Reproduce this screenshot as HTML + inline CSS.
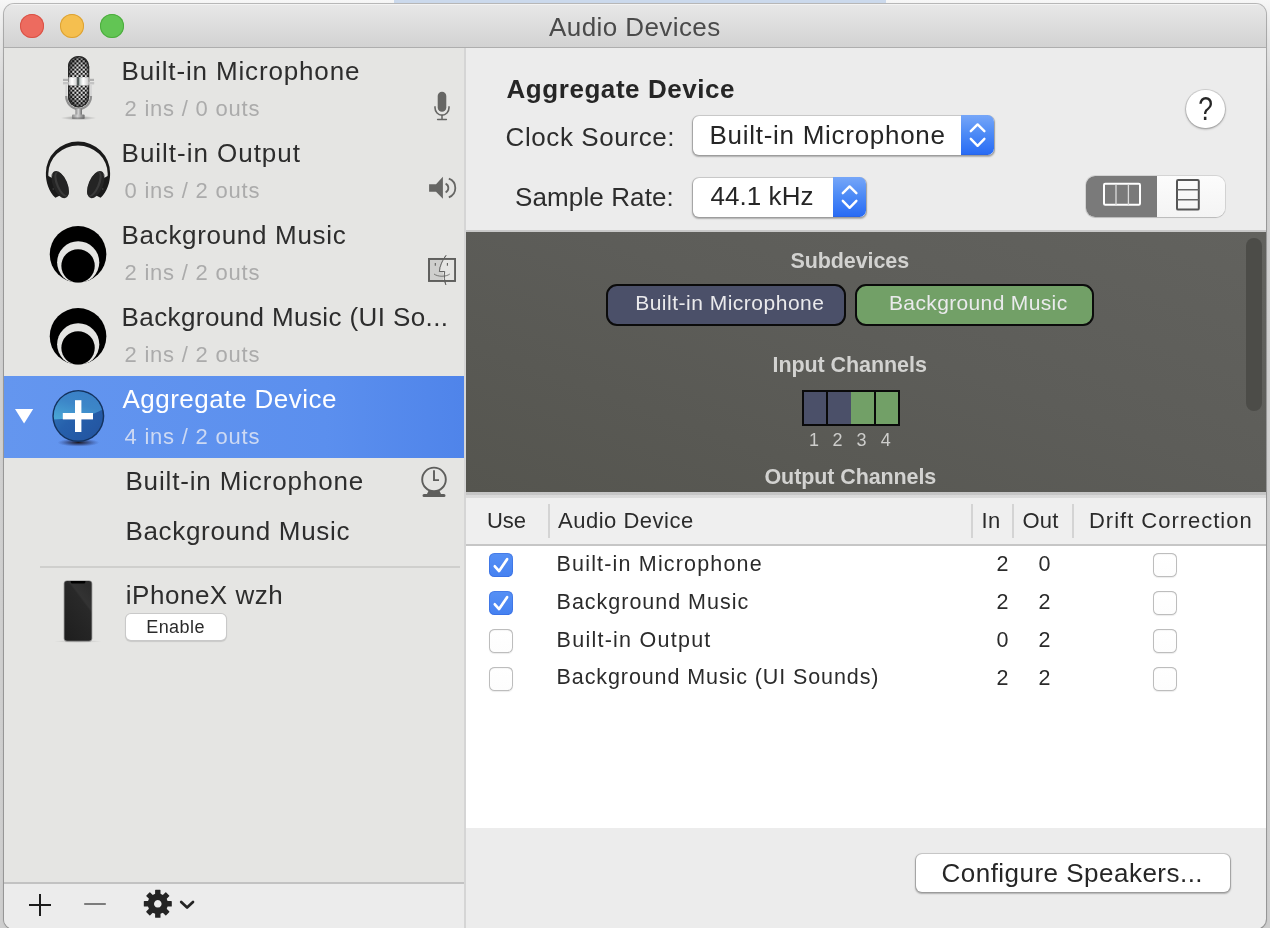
<!DOCTYPE html>
<html>
<head>
<meta charset="utf-8">
<title>Audio Devices</title>
<style>
*{box-sizing:border-box;margin:0;padding:0}
html,body{width:1270px;height:928px;overflow:hidden;background:linear-gradient(#f7f7f7 0,#f3f3f3 8px,#e6e6e6 40px,#d8d8d8 90px,#d1d1d1 140px,#cecece 100%);font-family:"Liberation Sans",sans-serif;color:#2b2b2b}
.abs{position:absolute}
.t{position:absolute;white-space:pre;line-height:1}
#topstrip{left:394px;top:0;width:492px;height:3.4px;background:#cbd9ec}
#win{left:4px;top:4px;width:1262px;height:925px;border-radius:10px;background:#ececec;box-shadow:0 0 0 1px rgba(0,0,0,.24),0 1px 3px 0 rgba(0,0,0,.12);overflow:hidden}
#pg{left:-4px;top:-4px;width:1270px;height:940px;will-change:transform}
#titlebar{left:4px;top:4px;width:1262px;height:44px;background:linear-gradient(#e8e8e8,#d2d2d2);border-bottom:1px solid #aeaeae;box-shadow:inset 0 1px 0 #f3f3f3}
.tl{position:absolute;top:14px;width:24px;height:24px;border-radius:50%}
#sidebar{left:4px;top:48px;width:460px;height:834px;background:#e5e5e3}
#sidediv{left:464.2px;top:48px;width:1.9px;height:900px;background:#d5d5d5;z-index:3}
#sel{left:4px;top:376px;width:460px;height:82px;background:linear-gradient(90deg,#6496ef,#5b8fee 70%,#4f84ea)}
.h1{font-size:26px;color:#2d2d2d}
.sub{font-size:22px;color:#ababab}
#botbar{left:4px;top:881.7px;width:460px;height:62px;background:#ececec;border-top:2px solid #c2c2c2}
</style>
</head>
<body>
<div id="topstrip" class="abs"></div>
<div id="win" class="abs"><div id="pg" class="abs">
  <div id="titlebar" class="abs"></div>
  <div class="tl" style="left:20px;background:#ed6b5f;box-shadow:inset 0 0 0 1px #d95347"></div>
  <div class="tl" style="left:60px;background:#f5bf4f;box-shadow:inset 0 0 0 1px #dca235"></div>
  <div class="tl" style="left:100px;background:#62c554;box-shadow:inset 0 0 0 1px #4cac3e"></div>
  <div class="t" style="left:549px;top:14px;font-size:26px;color:#4a4a4a;letter-spacing:.42px">Audio Devices</div>

  <!-- SIDEBAR -->
  <div id="sidebar" class="abs"></div>
  <div id="sel" class="abs"></div>
  <div id="sidediv" class="abs"></div>
  <div id="botbar" class="abs"></div>

  <!-- SIDEBAR-CONTENT -->
  <div class="t h1" style="left:121.6px;top:58px;letter-spacing:.85px">Built-in Microphone</div>
  <div class="t sub" style="left:124.5px;top:98.2px;letter-spacing:.78px">2 ins / 0 outs</div>
  <div class="t h1" style="left:121.6px;top:140px;letter-spacing:.97px">Built-in Output</div>
  <div class="t sub" style="left:124.5px;top:180.2px;letter-spacing:.78px">0 ins / 2 outs</div>
  <div class="t h1" style="left:121.6px;top:222px;letter-spacing:.68px">Background Music</div>
  <div class="t sub" style="left:124.5px;top:262.2px;letter-spacing:.78px">2 ins / 2 outs</div>
  <div class="t h1" style="left:121.6px;top:304px;letter-spacing:.4px">Background Music (UI So...</div>
  <div class="t sub" style="left:124.5px;top:344.2px;letter-spacing:.78px">2 ins / 2 outs</div>
  <div class="t h1" style="left:122.4px;top:386px;letter-spacing:.5px;color:#fff">Aggregate Device</div>
  <div class="t sub" style="left:124.5px;top:426.2px;letter-spacing:.78px;color:#cdd9f3">4 ins / 2 outs</div>
  <div class="t h1" style="left:125.4px;top:468px;letter-spacing:.85px">Built-in Microphone</div>
  <div class="t h1" style="left:125.4px;top:518px;letter-spacing:.68px">Background Music</div>
  <div class="abs" style="left:40px;top:566px;width:420px;height:2px;background:#cfcfcd"></div>
  <div class="t h1" style="left:125.8px;top:582px;letter-spacing:.52px">iPhoneX wzh</div>
  <div class="abs" style="left:126px;top:614px;width:100px;height:26px;background:#fff;border-radius:5px;box-shadow:0 0 0 1px #c9c9c9,0 1px 1px 1px rgba(0,0,0,.12)"></div>
  <div class="t" style="left:146.2px;top:618px;font-size:18px;letter-spacing:.45px;color:#2b2b2b">Enable</div>

  <!-- SIDEBAR-ICONS -->
  <!-- chrome microphone -->
  <svg class="abs" style="left:40px;top:50px" width="80" height="80" viewBox="40 50 80 80">
    <defs>
      <pattern id="mesh" x="68" y="56" width="4.2" height="4.2" patternUnits="userSpaceOnUse">
        <rect width="4.2" height="4.2" fill="#f4f4f4"/>
        <rect x="0" y="0" width="2.1" height="2.1" fill="#111"/>
        <rect x="2.1" y="2.1" width="2.1" height="2.1" fill="#111"/>
      </pattern>
      <radialGradient id="meshShade" cx="0.55" cy="0.5" r="0.62">
        <stop offset="0" stop-color="#000" stop-opacity="0"/>
        <stop offset="0.55" stop-color="#000" stop-opacity="0.1"/>
        <stop offset="1" stop-color="#222" stop-opacity="0.85"/>
      </radialGradient>
      <linearGradient id="band" x1="0" x2="1">
        <stop offset="0" stop-color="#cfcfcf"/><stop offset="0.18" stop-color="#ffffff"/>
        <stop offset="0.38" stop-color="#d8d8d8"/><stop offset="0.47" stop-color="#26302f"/>
        <stop offset="0.56" stop-color="#bfc7c6"/><stop offset="0.72" stop-color="#ffffff"/>
        <stop offset="1" stop-color="#c8c8c8"/>
      </linearGradient>
      <linearGradient id="stem" x1="0" x2="1">
        <stop offset="0" stop-color="#8a8a8a"/><stop offset="0.45" stop-color="#d2d2d2"/><stop offset="1" stop-color="#6e6e6e"/>
      </linearGradient>
      <radialGradient id="micshadow" cx="0.5" cy="0.5" r="0.5">
        <stop offset="0" stop-color="#000" stop-opacity="0.35"/><stop offset="1" stop-color="#000" stop-opacity="0"/>
      </radialGradient>
    </defs>
    <ellipse cx="78.5" cy="118" rx="18" ry="2.2" fill="url(#micshadow)"/>
    <rect x="68" y="56" width="21.2" height="51.4" rx="10.6" fill="#3a3a3a"/>
    <rect x="69" y="57" width="19.2" height="49.4" rx="9.6" fill="url(#mesh)"/>
    <rect x="68" y="56" width="21.2" height="51.4" rx="10.6" fill="url(#meshShade)"/>
    <path d="M66.2 85 V96 A12.4 13 0 0 0 91 96 V85" fill="none" stroke="#d4d4d4" stroke-width="1.6"/>
    <path d="M66.2 96 A12.4 13 0 0 0 91 96" fill="none" stroke="#8f8f8f" stroke-width="2.2"/>
    <rect x="63" y="78.8" width="5" height="2.2" fill="#b0b0b0"/><rect x="63" y="82" width="5.6" height="2.4" fill="#c4c4c4"/>
    <rect x="89" y="78.8" width="5" height="2.2" fill="#b0b0b0"/><rect x="88.6" y="82" width="5.6" height="2.4" fill="#c4c4c4"/>
    <rect x="68.4" y="77.2" width="20.4" height="8.2" fill="url(#band)"/>
    <rect x="75.4" y="108.6" width="6.6" height="7" fill="url(#stem)"/>
    <rect x="72" y="114.6" width="12.6" height="4.2" rx="1" fill="url(#stem)"/>
    <rect x="72" y="117.4" width="12.6" height="1.4" rx="0.7" fill="#5a5a5a" opacity=".6"/>
  </svg>

  <!-- headphones -->
  <svg class="abs" style="left:38px;top:132px" width="80" height="80" viewBox="0 0 80 80">
    <path fill-rule="evenodd" fill="#1a1a1a" d="M7.9 41 A32.1 31.4 0 0 1 72.1 41 C72.4 50 69 60 62.6 65.8 L55 62 L66 46 L69.6 44 L69.7 41.8 A29.7 28.2 0 0 0 10.3 41.8 L10.4 44 L14 46 L25 62 L17.4 65.8 C11 60 7.6 50 7.9 41 Z"/>
    <ellipse cx="22.2" cy="52.6" rx="7.2" ry="14.4" transform="rotate(-23 22.2 52.6)" fill="#252525"/>
    <ellipse cx="23.2" cy="52.3" rx="5" ry="13" transform="rotate(-23 23.2 52.3)" fill="#3a3a3a"/>
    <ellipse cx="24.6" cy="52" rx="4.2" ry="12.4" transform="rotate(-23 24.6 52)" fill="#242424"/>
    <ellipse cx="57.8" cy="52.6" rx="7.2" ry="14.4" transform="rotate(23 57.8 52.6)" fill="#252525"/>
    <ellipse cx="56.8" cy="52.3" rx="5" ry="13" transform="rotate(23 56.8 52.3)" fill="#3a3a3a"/>
    <ellipse cx="55.4" cy="52" rx="4.2" ry="12.4" transform="rotate(23 55.4 52)" fill="#242424"/>
    <circle cx="14.2" cy="43" r="0.8" fill="#555"/><circle cx="65.8" cy="43" r="0.8" fill="#555"/>
    <circle cx="15.2" cy="57" r="0.7" fill="#4a4a4a"/><circle cx="64.8" cy="57" r="0.7" fill="#4a4a4a"/>
  </svg>

  <!-- Background Music icons -->
  <svg class="abs" style="left:48px;top:224px" width="60" height="60" viewBox="48 224 60 60">
    <defs><clipPath id="bgmc"><circle cx="78.05" cy="254.35" r="28.3"/></clipPath></defs><circle cx="78.05" cy="254.35" r="28.3" fill="#000"/><circle cx="78.2" cy="262.3" r="21.1" fill="#e5e5e3" clip-path="url(#bgmc)"/><circle cx="78.05" cy="265.9" r="16.7" fill="#000"/>
  </svg>
  <svg class="abs" style="left:48px;top:306px" width="60" height="60" viewBox="48 224 60 60">
    <circle cx="78.05" cy="254.35" r="28.3" fill="#000"/><circle cx="78.2" cy="262.3" r="21.1" fill="#e5e5e3" clip-path="url(#bgmc)"/><circle cx="78.05" cy="265.9" r="16.7" fill="#000"/>
  </svg>

  <!-- disclosure triangle + aggregate icon -->
  <svg class="abs" style="left:4px;top:376px" width="120" height="82" viewBox="4 376 120 82">
    <defs>
      <radialGradient id="aggsh" cx="0.5" cy="0.5" r="0.5"><stop offset="0" stop-color="#1a1010" stop-opacity=".95"/><stop offset=".5" stop-color="#20264a" stop-opacity=".55"/><stop offset="1" stop-color="#2a3c80" stop-opacity="0"/></radialGradient>
      <linearGradient id="aggtop" x1="0.7" y1="0" x2="0.2" y2="1"><stop offset="0" stop-color="#3a7ec6"/><stop offset="0.5" stop-color="#3c86c8"/><stop offset="1" stop-color="#49a6d6"/></linearGradient>
      <linearGradient id="aggbot" x1="0" y1="0" x2="1" y2="1"><stop offset="0" stop-color="#3a86c4"/><stop offset="0.45" stop-color="#2660ac"/><stop offset="1" stop-color="#22509c"/></linearGradient>
      <clipPath id="aggclip"><circle cx="78.3" cy="416.1" r="24.5"/></clipPath>
    </defs>
    <path d="M15 409 H33.2 L24.1 423.6 Z" fill="#fff"/>
    <ellipse cx="78.3" cy="442.6" rx="21" ry="4" fill="url(#aggsh)"/>
    <circle cx="78.3" cy="416.1" r="26" fill="#14335f"/>
    <g clip-path="url(#aggclip)">
      <rect x="50" y="388" width="58" height="58" fill="url(#aggbot)"/>
      <path d="M50 388 H108 V406 C96 415 80 419 50 419.6 Z" fill="url(#aggtop)"/>
    </g>
    <rect x="75" y="400.2" width="6.4" height="31.8" fill="#fff"/>
    <rect x="62.8" y="413" width="30.2" height="6.4" fill="#fff"/>
  </svg>

  <!-- small mic -->
  <svg class="abs" style="left:414px;top:84px" width="50" height="40" viewBox="414 84 50 40">
    <rect x="437.7" y="91.8" width="8.6" height="20" rx="4.3" fill="#666664"/>
    <path d="M435 106.2 V107.8 A7 7.4 0 0 0 449 107.8 V106.2" fill="none" stroke="#666664" stroke-width="1.6"/>
    <path d="M442 115 V119.4 M437.6 119.5 H446.4" fill="none" stroke="#666664" stroke-width="1.5" stroke-linecap="round"/>
  </svg>

  <!-- speaker -->
  <svg class="abs" style="left:414px;top:168px" width="50" height="40" viewBox="414 168 50 40">
    <path d="M429.1 184.2 H436 L442.9 176.8 V198.8 L436 191.7 H429.1 Z" fill="#666664"/>
    <path d="M445.6 183.6 A4.9 4.9 0 0 1 445.6 192.4" fill="none" stroke="#666664" stroke-width="1.8"/>
    <path d="M448.8 178.7 A9.9 9.9 0 0 1 448.8 197.3" fill="none" stroke="#666664" stroke-width="1.8"/>
  </svg>

  <!-- finder badge -->
  <svg class="abs" style="left:414px;top:248px" width="50" height="40" viewBox="414 248 50 40">
    <rect x="429" y="258.9" width="14" height="22" fill="#cfcfcd"/>
    <rect x="429" y="258.9" width="26" height="22" fill="none" stroke="#5f5f5d" stroke-width="1.8"/>
    <path d="M446 255.4 C442.6 260 439.8 266 439.4 271.5 H444.7 C444 276 444.4 281 445.8 284.8" fill="none" stroke="#5f5f5d" stroke-width="0.9"/>
    <path d="M442.8 259.8 C441 263.6 439.6 267.6 439.4 271.5 H444.7 C444.2 275 444.2 278 444.6 281 L455 281 V259.8 Z" fill="#e5e5e3"/>
    <rect x="429" y="258.9" width="26" height="22" fill="none" stroke="#5f5f5d" stroke-width="1.8"/>
    <path d="M446 255.4 C442.6 260 439.8 266 439.4 271.5 H444.7 C444 276 444.4 281 445.8 284.8" fill="none" stroke="#5f5f5d" stroke-width="0.9"/>
    <path d="M435.3 263 V265.8 M447.4 263 V265.8" stroke="#5f5f5d" stroke-width="1.1"/>
    <path d="M434 274 C438 277 446 277 449.8 274" fill="none" stroke="#5f5f5d" stroke-width="0.8"/>
  </svg>

  <!-- clock -->
  <svg class="abs" style="left:409px;top:462px" width="50" height="40" viewBox="409 462 50 40">
    <circle cx="434" cy="479.4" r="11.8" fill="none" stroke="#5e5e5c" stroke-width="1.9"/>
    <path d="M434 470.2 V480.1 H439" fill="none" stroke="#5e5e5c" stroke-width="1.9"/>
    <path d="M428.4 491 H439.6 L441 494 H444 A1.5 1.5 0 0 1 444 497 H424 A1.5 1.5 0 0 1 424 494 H427 Z" fill="#5e5e5c"/>
  </svg>

  <!-- iPhone -->
  <svg class="abs" style="left:44px;top:572px" width="80" height="80" viewBox="44 572 80 80">
    <defs>
      <linearGradient id="ipg" x1="0.8" y1="0" x2="0.2" y2="1"><stop offset="0" stop-color="#2c2c2c"/><stop offset="0.27" stop-color="#333"/><stop offset="0.31" stop-color="#292929"/><stop offset="1" stop-color="#1f1f1f"/></linearGradient>
      <radialGradient id="ipsh" cx="0.5" cy="0.5" r="0.5"><stop offset="0" stop-color="#000" stop-opacity="0.18"/><stop offset="1" stop-color="#000" stop-opacity="0"/></radialGradient>
    </defs>
    <ellipse cx="78" cy="641.4" rx="24" ry="1.6" fill="url(#ipsh)"/>
    <rect x="63.7" y="580.4" width="28.6" height="61.3" rx="3.4" fill="#8a8a8a"/>
    <rect x="64.5" y="581" width="27" height="59.8" rx="2.8" fill="url(#ipg)"/>
    <path d="M70.7 581 H85.4 V582 A1.6 1.6 0 0 1 83.8 583.6 H72.3 A1.6 1.6 0 0 1 70.7 582 Z" fill="#000"/>
  </svg>

  <!-- bottom bar icons -->
  <svg class="abs" style="left:4px;top:884px" width="210" height="44" viewBox="4 884 210 44">
    <path d="M40 894 V916 M29 905 H51" stroke="#1c1c1c" stroke-width="2" fill="none"/>
    <path d="M84.2 904 H105.8" stroke="#7c7c7c" stroke-width="2" fill="none"/>
    <g transform="translate(157.8 903.8)" fill="#242424">
      <path fill-rule="evenodd" d="M0 -10.2 A10.2 10.2 0 1 0 0.001 -10.2 Z M0 -3.8 A3.8 3.8 0 1 1 -0.001 -3.8 Z"/>
      <g id="tooth"><rect x="-2.7" y="-14" width="5.4" height="5.5" rx="0.6"/></g>
      <use href="#tooth" transform="rotate(45)"/><use href="#tooth" transform="rotate(90)"/><use href="#tooth" transform="rotate(135)"/>
      <use href="#tooth" transform="rotate(180)"/><use href="#tooth" transform="rotate(225)"/><use href="#tooth" transform="rotate(270)"/><use href="#tooth" transform="rotate(315)"/>
    </g>
    <path d="M181.2 902 L187.1 907.6 L193 902" stroke="#242424" stroke-width="2.7" fill="none" stroke-linecap="round" stroke-linejoin="round"/>
  </svg>

  <!-- RIGHT-PANE -->
  <style>
  .pop{position:absolute;height:39px;background:#fff;border-radius:6px;box-shadow:0 0 0 1px rgba(0,0,0,.11),0 1px 1.5px 0.5px rgba(0,0,0,.26)}
  .pop .cap{position:absolute;right:-.2px;top:-.7px;width:33.2px;height:40.4px;border-radius:0 6.5px 6.5px 0;background:linear-gradient(#76a6f8,#4e8bf6 45%,#2a6df5 96%,#2a62e0)}
  .pl{font-size:21px;color:#eaeaec}
  .hd{font-size:21.5px;font-weight:700;color:#d2d2d0}
  .th{font-size:22px;color:#2b2b2b}
  .td{font-size:21.5px;color:#2b2b2b}
  .cb{position:absolute;width:24px;height:24px;border-radius:5.5px;background:linear-gradient(#fff,#fdfdfd);box-shadow:inset 0 0 0 1px #bdbdbd,inset 0 2px 1.5px -1px rgba(0,0,0,.18),0 1px 1px rgba(0,0,0,.08)}
  .cb.on{background:linear-gradient(#5690f5,#4581f1);box-shadow:inset 0 0 0 1px rgba(40,90,210,.35)}
  .vs{position:absolute;top:504px;width:2px;height:34px;background:#d4d4d4}
  </style>
  <div class="t" style="left:506.5px;top:75.7px;font-size:26px;font-weight:700;color:#262626;letter-spacing:.56px">Aggregate Device</div>
  <div class="t h1" style="left:505.5px;top:124px;letter-spacing:.6px">Clock Source:</div>
  <div class="t h1" style="left:515px;top:184.4px;letter-spacing:.12px">Sample Rate:</div>
  <div class="pop" style="left:692.5px;top:115.5px;width:301.5px"><div class="cap"></div></div>
  <div class="pop" style="left:692.5px;top:177.5px;width:173px"><div class="cap"></div></div>
  <div class="t h1" style="left:709.5px;top:121.5px;letter-spacing:.72px;color:#262626">Built-in Microphone</div>
  <div class="t h1" style="left:710.5px;top:183px;letter-spacing:.05px;color:#262626">44.1 kHz</div>
  <svg class="abs" style="left:961px;top:115px" width="34" height="40" viewBox="961 115 34 40"><path d="M970.8 131.2 L977.6 124.4 L984.4 131.2 M970.8 138.8 L977.6 145.8 L984.4 138.8" fill="none" stroke="#fff" stroke-width="2.4" stroke-linecap="round" stroke-linejoin="round"/></svg>
  <svg class="abs" style="left:833px;top:177px" width="34" height="40" viewBox="961 115 34 40"><path d="M970.8 131.2 L977.6 124.4 L984.4 131.2 M970.8 138.8 L977.6 145.8 L984.4 138.8" fill="none" stroke="#fff" stroke-width="2.4" stroke-linecap="round" stroke-linejoin="round"/></svg>

  <!-- help button -->
  <div class="abs" style="left:1186px;top:89.5px;width:38.5px;height:38.5px;border-radius:50%;background:#fff;box-shadow:0 0 0 1px rgba(0,0,0,.1),0 1px 2px 0.5px rgba(0,0,0,.25)"></div>
  <div class="t" style="left:1197px;top:93.6px;font-size:30px;color:#262626;width:17px;text-align:center;transform:scale(.88,1.08);transform-origin:50% 50%">?</div>

  <!-- segmented control -->
  <div class="abs" style="left:1086px;top:175.5px;width:139px;height:41px;border-radius:9px;background:linear-gradient(#fcfcfc,#f4f4f4);box-shadow:0 0 0 1px rgba(0,0,0,.1),0 1px 1px rgba(0,0,0,.12);overflow:hidden"><div class="abs" style="left:0;top:0;width:70.5px;height:41px;background:#7a7a7a"></div></div>
  <svg class="abs" style="left:1086px;top:175px" width="140" height="42" viewBox="1086 175 140 42">
    <rect x="1104" y="183.8" width="36" height="21" rx="1.2" fill="none" stroke="#fff" stroke-width="2"/>
    <path d="M1116 184 V205 M1128.4 184 V205" stroke="#dcdcdc" stroke-width="1.3"/>
    <rect x="1177" y="180" width="21.8" height="29.6" rx="1.2" fill="none" stroke="#555" stroke-width="2"/>
    <path d="M1177 189.8 H1199 M1177 199.8 H1199" stroke="#666" stroke-width="1.4"/>
  </svg>

  <!-- dark panel -->
  <div class="abs" style="left:466px;top:230px;width:800px;height:2px;background:#c8c8c8"></div>
  <div class="abs" style="left:466px;top:232px;width:800px;height:260px;background:linear-gradient(200deg,#62625e 0%,#5d5d59 45%,#55554f 100%)"></div>
  <div class="abs" style="left:1246px;top:238px;width:16px;height:173px;border-radius:8px;background:#4c4c48"></div>
  <div class="t hd" style="left:790.5px;top:250.6px;letter-spacing:-.1px">Subdevices</div>
  <div class="abs" style="left:606px;top:284px;width:240px;height:41.5px;border-radius:11px;background:#4b5069;border:2px solid #0b0b0b"></div>
  <div class="abs" style="left:854.5px;top:284px;width:239.5px;height:41.5px;border-radius:11px;background:#72a067;border:2px solid #0b0b0b"></div>
  <div class="t pl" style="left:635.2px;top:291.5px;letter-spacing:.5px">Built-in Microphone</div>
  <div class="t pl" style="left:889px;top:291.5px;letter-spacing:.36px">Background Music</div>
  <div class="t hd" style="left:772.5px;top:355.4px;letter-spacing:-.07px">Input Channels</div>
  <div class="abs" style="left:802.1px;top:390px;width:97.9px;height:35.8px;background:#0a0a0a"></div>
  <div class="abs" style="left:803.9px;top:391.8px;width:22.5px;height:32.2px;background:#4b5069"></div>
  <div class="abs" style="left:827.7px;top:391.8px;width:23px;height:32.2px;background:#4b5069"></div>
  <div class="abs" style="left:851.4px;top:391.8px;width:23px;height:32.2px;background:#72a067"></div>
  <div class="abs" style="left:875.7px;top:391.8px;width:22.4px;height:32.2px;background:#72a067"></div>
  <div class="t" style="left:809px;top:430.7px;font-size:18px;color:#cdcdcb;letter-spacing:0">1</div>
  <div class="t" style="left:832.4px;top:430.7px;font-size:18px;color:#cdcdcb">2</div>
  <div class="t" style="left:856.6px;top:430.7px;font-size:18px;color:#cdcdcb">3</div>
  <div class="t" style="left:880.8px;top:430.7px;font-size:18px;color:#cdcdcb">4</div>
  <div class="t hd" style="left:764.5px;top:467.2px;letter-spacing:-.1px">Output Channels</div>

  <!-- table -->
  <div class="abs" style="left:465px;top:491.7px;width:801px;height:6px;background:linear-gradient(#c4c4c4 0,#c6c6c6 45%,#d9d9d9 46%,#dcdcdc 100%)"></div>
  <div class="abs" style="left:465px;top:497.5px;width:801px;height:47px;background:#efefef"></div>
  <div class="abs" style="left:465px;top:544px;width:801px;height:2px;background:#c6c6c6"></div>
  <div class="abs" style="left:465px;top:546px;width:801px;height:282px;background:#fff"></div>
  <div class="vs" style="left:548px"></div><div class="vs" style="left:971px"></div><div class="vs" style="left:1012px"></div><div class="vs" style="left:1072px"></div>
  <div class="t th" style="left:487px;top:509.5px;letter-spacing:-.05px">Use</div>
  <div class="t th" style="left:558px;top:509.5px;letter-spacing:.5px">Audio Device</div>
  <div class="t th" style="left:981.5px;top:509.5px;letter-spacing:.3px">In</div>
  <div class="t th" style="left:1022.5px;top:509.5px;letter-spacing:.2px">Out</div>
  <div class="t th" style="left:1089px;top:509.5px;letter-spacing:.98px">Drift Correction</div>

  <div class="cb on" style="left:489px;top:553px"></div>
  <div class="cb on" style="left:489px;top:591px"></div>
  <div class="cb" style="left:489px;top:629px"></div>
  <div class="cb" style="left:489px;top:667px"></div>
  <svg class="abs" style="left:489px;top:553px" width="24" height="62" viewBox="0 0 24 62"><path d="M5.8 13.3 L10.1 18.1 L18.1 6.2 M5.8 51.3 L10.1 56.1 L18.1 44.2" fill="none" stroke="#fff" stroke-width="2.7" stroke-linecap="round" stroke-linejoin="round"/></svg>
  <div class="cb" style="left:1153px;top:553px"></div>
  <div class="cb" style="left:1153px;top:591px"></div>
  <div class="cb" style="left:1153px;top:629px"></div>
  <div class="cb" style="left:1153px;top:667px"></div>

  <div class="t td" style="left:556.6px;top:553.7px;letter-spacing:1.17px">Built-in Microphone</div>
  <div class="t td" style="left:556.6px;top:591.6px;letter-spacing:.98px">Background Music</div>
  <div class="t td" style="left:556.6px;top:629.5px;letter-spacing:1.25px">Built-in Output</div>
  <div class="t td" style="left:556.6px;top:667.4px;letter-spacing:.9px">Background Music (UI Sounds)</div>
  <div class="t td" style="left:996.6px;top:554.3px">2</div><div class="t td" style="left:1038.6px;top:554.3px">0</div>
  <div class="t td" style="left:996.6px;top:592.2px">2</div><div class="t td" style="left:1038.6px;top:592.2px">2</div>
  <div class="t td" style="left:996.6px;top:630.1px">0</div><div class="t td" style="left:1038.6px;top:630.1px">2</div>
  <div class="t td" style="left:996.6px;top:668.0px">2</div><div class="t td" style="left:1038.6px;top:668.0px">2</div>

  <!-- configure speakers -->
  <div class="abs" style="left:915.5px;top:853.5px;width:314.5px;height:38.5px;border-radius:6px;background:#fff;box-shadow:0 0 0 1px rgba(0,0,0,.12),0 1px 1.5px 0.5px rgba(0,0,0,.26)"></div>
  <div class="t h1" style="left:941.5px;top:860px;letter-spacing:.48px;color:#262626">Configure Speakers...</div>

</div></div>
</body>
</html>
